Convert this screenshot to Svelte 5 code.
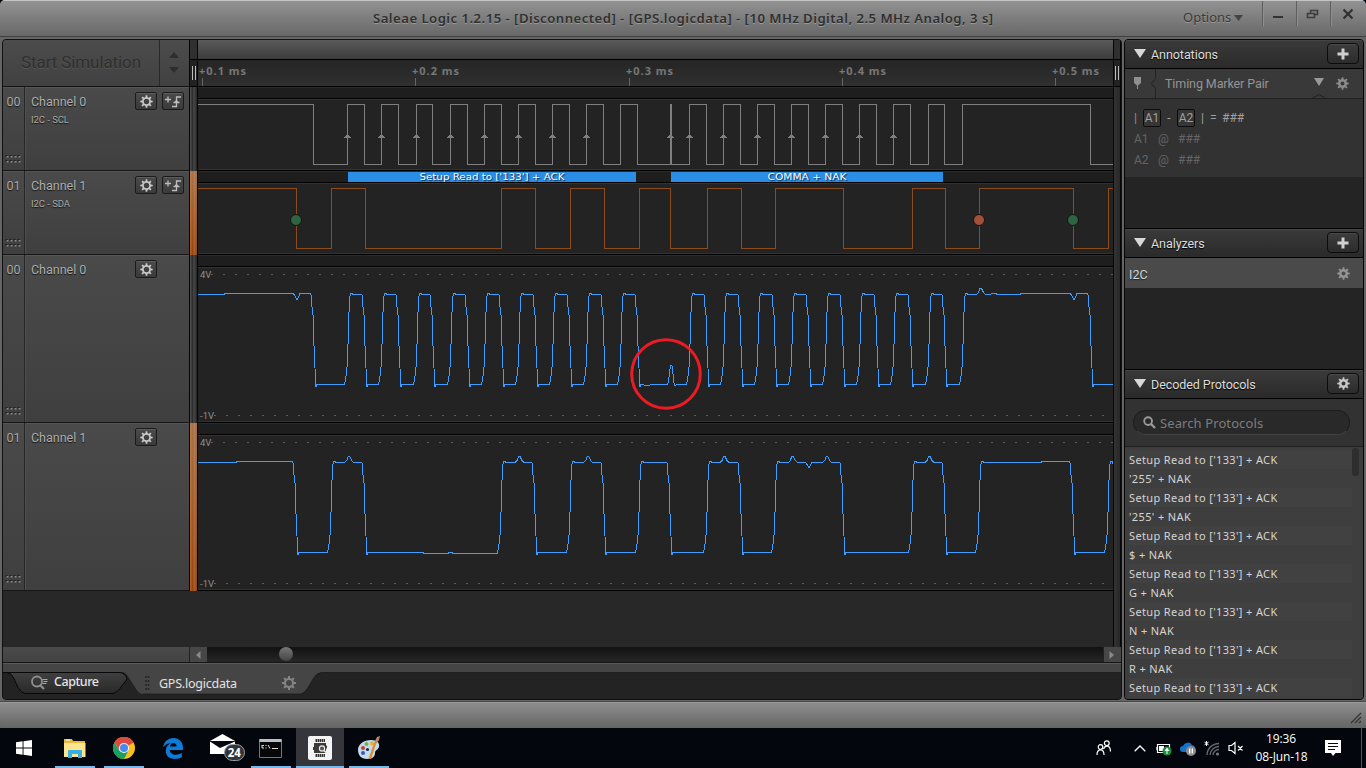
<script>
  const LEFT = 198;
  const WIDTH = 915;

  const sclEdges = [313, 347, 364, 381, 398, 416, 432, 450, 467, 484, 501, 518, 535, 552, 569, 586, 603, 620, 637,
    689, 706, 723, 740, 757, 774, 791, 808, 825, 842, 859, 876, 893, 910, 928, 944, 962, 1090];
  const sdaEdges = [296, 331, 365, 501, 535, 570, 604, 639, 670, 707, 741, 775, 843, 912, 945, 979, 1073, 1108];
  const sclArrows = [347, 381, 416, 450, 484, 518, 552, 586, 670, 689, 723, 757, 791, 825, 859, 893];

  function digital(edges) {
    let high = true;
    let d = `M${LEFT} 17.5`;
    for (const e of edges) {
      d += `H${e + 0.5}V${high ? 77.5 : 17.5}`;
      high = !high;
    }
    return d + `H${LEFT + WIDTH}`;
  }

  // Slow edges of the sampled voltage, relative to the logic transition.
  const fall = [[-2, 40], [-1.5, 43], [-1, 52], [0, 60], [0.5, 69], [1, 91], [2, 113], [2.5, 131.5], [3.5, 131.5], [4, 129.5], [6, 129.5]];
  const rise = [[-3, 129.5], [-2, 125], [-1, 117], [0, 108], [1, 71], [2, 44], [3, 38.5], [4.5, 38.5], [5, 39.5]];

  function analog(edges, extras, start, shift) {
    let high = true;
    const pts = [[LEFT, 39.5], [start, 39.5], [start, 38.5]];
    for (const e of edges) {
      const rested = [296, 313, 1073, 1090].includes(e);
      if (high) pts.push([e - 3 + shift, rested ? 38.5 : 39.5]);
      for (const [dx, y] of high ? fall : rise) pts.push([e + dx + shift + (high ? 0 : 0.5), y]);
      high = !high;
    }
    pts.push([LEFT + WIDTH, high ? 38.5 : 129.5]);
    for (const ex of extras) for (const p of ex) pts.push(p);
    pts.sort((a, b) => a[0] - b[0]);
    return pts.map((p) => p.join(',')).join(' ');
  }
  const bump = (x, b = 39.5) => [[x - 4, b], [x - 2, b - 2], [x - 0.5, 33.5], [x + 1, 33.5], [x + 3, b - 2], [x + 5, b]];
  const dip = (x, b = 38.5) => [[x - 3.5, b], [x - 1.5, 42], [x, 45], [x + 1.5, 42], [x + 3, b]];

  const ch0 = analog(sclEdges, [
    dip(297), dip(1074), bump(980.5),
    [[645, 130.5], [655, 129.5], [667.5, 129.5], [668.5, 127], [669.5, 118], [670.5, 110.5], [672, 110.5], [673, 119], [674, 128], [675, 131], [677, 129.5]],
    [[996, 38.5], [997, 39.5], [1020, 39.5], [1021, 38.5]]
  ], 224, 0);
  const ch1 = analog(sdaEdges, [
    bump(348.7), bump(519), bump(587.7), bump(724), bump(792.3), bump(826.7), bump(929), dip(809, 39.5),
    [[423, 129.5], [424, 130.5], [448, 130.5], [449, 129.5], [452, 129.5], [453, 130.5], [497, 130.5]],
    [[1041, 39.5], [1042, 38.5]]
  ], 236, -1);

  const rows = [
    { n: '00', name: 'Channel 0', sub: 'I2C - SCL', kind: 'digital', hot: false, h: 84, color: '#7f7f7f', d: digital(sclEdges) },
    { n: '01', name: 'Channel 1', sub: 'I2C - SDA', kind: 'digital', hot: true, h: 84, color: '#8b4b1b', d: digital(sdaEdges) },
    { n: '00', name: 'Channel 0', kind: 'analog', hot: false, h: 168, pts: ch0 },
    { n: '01', name: 'Channel 1', kind: 'analog', hot: true, h: 168, pts: ch1 }
  ];
  const frames = [{ x: 348, w: 288, t: "Setup Read to ['133'] + ACK", l: 145 }, { x: 671, w: 272, t: 'COMMA + NAK', l: 79 }];
  const ticks = [202, 415, 629, 842, 1055];
  const S = "Setup Read to ['133'] + ACK";
  const decoded = [S, "'255' + NAK", S, "'255' + NAK", S, '$ + NAK', S, 'G + NAK', S, 'N + NAK', S, 'R + NAK', S];

  function gearPath(teeth, ro, ri) {
    const pts = [];
    const step = (Math.PI * 2) / teeth;
    for (let i = 0; i < teeth; i++) {
      const a = i * step - Math.PI / 2;
      for (const [f, r] of [[-0.27, ri], [-0.17, ro], [0.17, ro], [0.27, ri]])
        pts.push(`${(Math.cos(a + f * step) * r).toFixed(2)} ${(Math.sin(a + f * step) * r).toFixed(2)}`);
    }
    return 'M' + pts.join('L') + 'Z';
  }
  const gearD = gearPath(8, 6.3, 4.5);
</script>

{#snippet gear(size, color, hole)}
  <svg width={size} height={size} viewBox="-6.5 -6.5 13 13">
    <path fill-rule="evenodd" fill={color} d={gearD + `M${hole} 0A${hole} ${hole} 0 1 0 ${-hole} 0A${hole} ${hole} 0 1 0 ${hole} 0Z`} />
  </svg>
{/snippet}

{#snippet plus()}
  <svg width="12" height="12" viewBox="0 0 12 12"><path d="M6 .5v11M.5 6h11" stroke="#d0d0d0" stroke-width="3" /></svg>
{/snippet}

{#snippet tri()}
  <svg class="tri" width="12" height="9" viewBox="0 0 12 9"><path d="M0 0h12L6 9z" fill="#d8d8d8" /></svg>
{/snippet}

<div class="window">
  <header class="titlebar">
    <div class="title"><span>Saleae Logic 1.2.15 - [Disconnected] - [GPS.logicdata] - [10 MHz Digital, 2.5 MHz Analog, 3 s]</span></div>
    <div class="options">Options <svg width="9" height="6" viewBox="0 0 9 6"><path d="M0 0h9L4.500 6z" fill="#444" /></svg></div>
    <div class="wbtn"><svg width="12" height="14"><path d="M1 10h10" stroke="#333" stroke-width="2" /></svg></div>
    <div class="wbtn"><svg width="13" height="14" viewBox="0 0 13 14"><path d="M4.500 7V3.500h7v4h-3M1.500 6.500h7v4h-7z" fill="none" stroke="#3c3c3c" stroke-width="1.600" /></svg></div>
    <div class="wbtn last"><svg width="12" height="14" viewBox="0 0 12 14"><path d="M1.500 2.500l9 9M10.500 2.500l-9 9" stroke="#303030" stroke-width="2.200" /></svg></div>
  </header>

  <main>
    <section class="capture">
      <div class="row toolbar">
        <div class="sim">
          <div class="start">Start Simulation</div>
          <div class="spin">
            <svg width="10" height="21" viewBox="0 0 10 21"><path d="M0 6L5 0 10 6zM0 15h10L5 21z" fill="#2e2e2e" /></svg>
          </div>
        </div>
        <div class="gut top"><svg width="4" height="14"><path d="M.5 0v14M3.500 0v14" stroke="#bbb" /></svg></div>
        <div class="timeline">
          <div class="overview"></div>
          <svg class="ruler" width={WIDTH} height="26" viewBox="198 60 915 26">
            {#each ticks as t, i}
              <path d={`M${t + 0.5} 78v8`} stroke="#666" />
              <text x={t - 3} y="75" textLength="47">+0.{i + 1} ms</text>
            {/each}
          </svg>
        </div>
        <div class="gut top"><svg width="4" height="14"><path d="M.5 0v14M3.500 0v14" stroke="#bbb" /></svg></div>
      </div>

      {#each rows as r, idx}
        <div class="row" style={`height:${r.h}px`}>
          <div class="chan">
            <div class="num"><span>{r.n}</span>
              <svg width="16" height="8" viewBox="0 0 16 8">
                {#each [0, 4, 8, 12] as x}
                  {#each [0, 5] as y}
                    <rect x={x + 0.5} {y} width="2" height="2" fill="#1f1f1f" /><rect x={x + 1.500} y={y + 1} width="2" height="1.500" fill="#8a8a8a" />
                  {/each}
                {/each}
              </svg>
            </div>
            <div class="info">
              <div class="names"><b>{r.name}</b>{#if r.sub}<small>{r.sub}</small>{/if}</div>
              <div class="btns">
                <span class="btn">{@render gear(13, '#c8c8c8', 2.7)}</span>
                {#if r.sub}
                  <span class="btn"><svg width="18" height="14" viewBox="0 0 18 14"><path d="M1 5.500h6M4 2.500v6M8 12.500h4.500V3H17M9.500 8.500h6" fill="none" stroke="#bdbdbd" stroke-width="1.300" /><path d="M9.800 9l2.700-3.500L15.200 9z" fill="#bdbdbd" /></svg></span>
                {/if}
              </div>
            </div>
          </div>
          <div class="gut" class:hot={r.hot}></div>
          <div class="track">
            <svg width={WIDTH} height={r.h - 1} viewBox={`${LEFT} 0 ${WIDTH} ${r.h - 1}`}>
              <rect x="198" y="0" width="915" height="11" fill="#1e1e1e" />
              <rect x="198" y="0" width="915" height="1" fill="#2a2a2a" />
              <rect x="198" y="11" width="915" height="1" fill="#000" />
              <rect x="198" y="12" width="915" height="1" fill="#333" />
              <rect x="198" y={r.h - 2} width="915" height="1" fill="#333" />
              {#if r.kind === 'digital'}
                <path d={r.d} fill="none" stroke={r.color} shape-rendering="crispEdges" />
                {#if idx === 0}
                  <rect x="670" y="17" width="2" height="61" fill="#7f7f7f" />
                  {#each sclArrows as a}<path d={`M${a - 3} 51h7v-1h-1v-1h-1v-1h-3v1h-1v1h-1z`} fill="#7f7f7f" />{/each}
                {:else}
                  {#each frames as f}
                    <rect x={f.x} y="1" width={f.w} height="10" fill="#2a8ee6" />
                    <text class="frame" x={f.x + f.w / 2} y="9" text-anchor="middle" textLength={f.l} lengthAdjust="spacingAndGlyphs">{f.t}</text>
                  {/each}
                  {#each [[296, '#2c653f'], [979, '#a54f38'], [1073, '#2c653f']] as [x, c]}
                    <circle cx={x} cy="49" r="5.500" fill={c} stroke="#141414" />
                  {/each}
                {/if}
              {:else}
                <path d="M211 19.500h2M223 19.500H1113" stroke="#5c5c5c" stroke-dasharray="2 10" />
                <path d="M214 160.500h2M226 160.500H1108" stroke="#5c5c5c" stroke-dasharray="2 10" />
                <text class="volt" x="200" y="23">4V</text>
                <text class="volt" x="200" y="164">-1V</text>
                <polyline points={r.pts} fill="none" stroke="#3f9dff" stroke-width="1" shape-rendering="crispEdges" />
                {#if idx === 2}<circle cx="666" cy="119" r="34.300" fill="none" stroke="#ed1c24" stroke-width="3" />{/if}
              {/if}
            </svg>
          </div>
          <div class="gut side"></div>
        </div>
      {/each}

      <div class="row filler"><div></div><div></div><div></div><div class="gut side"></div></div>

      <div class="scroll">
        <div class="pad"></div>
        <div class="arrow"><svg width="6" height="8"><path d="M5.500 0v8L1 4z" fill="#8a8a8a" /></svg></div>
        <div class="rail"><i></i></div>
        <div class="arrow"><svg width="6" height="8"><path d="M.5 0v8L5 4z" fill="#8a8a8a" /></svg></div>
      </div>

      <svg class="tabs" width="1118" height="36" viewBox="3 663 1118 36">
        <defs>
          <linearGradient id="tg" x1="0" y1="0" x2="0" y2="1"><stop offset="0" stop-color="#404040" /><stop offset="1" stop-color="#292929" /></linearGradient>
        </defs>
        <rect x="3" y="663" width="1118" height="36" fill="#232323" />
        <path d="M3 663h1118v9.500H322q-5 0-8 5l-6 10q-4 6.500-8 6.500H143q-4 0-7.500-6l-7-11q-3-5-7-5H3z" fill="#454545" />
        <path d="M1121 672.500H322q-5 0-8 5l-6 10q-4 6.500-8 6.500H143" fill="none" stroke="#171717" stroke-width=".7" />
        <path d="M3 672.500h4q4 0 7 6l4 9q4 6 7 6h88q4-1 7-5l7-9.500q-2-6.500-8-6.500z" fill="url(#tg)" stroke="#080808" />
        <path d="M3 663.500h1118" stroke="#5a5a5a" />
        <circle cx="37" cy="681.500" r="5" fill="none" stroke="#8e8e8e" stroke-width="1.800" />
        <path d="M40 685l4 4" stroke="#8e8e8e" stroke-width="2.200" />
        <path d="M42.500 679.500h5M43.500 681.500h4M42.500 683.500h4" stroke="#aaa" />
        <text x="54" y="686" class="tab on" textLength="45">Capture</text>
        <path d="M146 676v15M148.500 676v15" stroke="#252525" stroke-width="1.500" stroke-dasharray="2 2" />
        <text x="159" y="688" class="tab" textLength="78">GPS.logicdata</text>
        <g transform="translate(289 683) scale(1.120)"><path d={gearD + 'M2.700 0A2.700 2.700 0 1 0 -2.700 0A2.700 2.700 0 1 0 2.700 0Z'} fill="#858585" fill-rule="evenodd" /></g>
      </svg>
    </section>

    <aside>
      <div class="head">{@render tri()}<span>Annotations</span><em>{@render plus()}</em></div>
      <div class="sub">
        <svg width="34" height="29" viewBox="0 0 34 29"><path d="M9 8h7v6l-3 2.500v3.500h-1v-3.500L9 14z" fill="#8f8f8f" /><path d="M30.500 0v9.500l-4 5 4 5V29" fill="none" stroke="#222" /></svg>
        <span>Timing Marker Pair</span>
        <svg width="20" height="30" viewBox="0 0 20 30"><path d="M5 9h10l-5 8z" fill="#999" /><path d="M2 30l8-4.500 8 4.500" fill="none" stroke="#222" /></svg>
        <i>{@render gear(13, '#8c8c8c', 2)}</i>
      </div>
      <div class="notes">
        <p><s class="bar">|</s><u>A1</u><s class="minus">-</s><u>A2</u><s class="bar2">|</s><s class="eq">=</s><s>###</s></p>
        <p class="dim"><s class="a">A1</s><s class="at">@</s><s>###</s></p>
        <p class="dim"><s class="a">A2</s><s class="at">@</s><s>###</s></p>
      </div>
      <div class="void one"></div>
      <div class="head line">{@render tri()}<span>Analyzers</span><em>{@render plus()}</em></div>
      <div class="i2c"><span>I2C</span>{@render gear(13, '#949494', 2)}</div>
      <div class="void two"></div>
      <div class="head line">{@render tri()}<span>Decoded Protocols</span><em>{@render gear(13, '#c8c8c8', 2)}</em></div>
      <div class="searchbox"><div class="search">
        <svg width="13" height="13" viewBox="0 0 14 14"><circle cx="5.500" cy="5.500" r="4.200" fill="none" stroke="#999" stroke-width="2" /><path d="M8.500 8.500L13 13" stroke="#999" stroke-width="2.400" /></svg>
        <span>Search Protocols</span></div></div>
      <div class="list">
        <div class="items">{#each decoded as d}<div>{d}</div>{/each}</div>
        <div class="thumb"></div>
      </div>
    </aside>
  </main>

  <footer><svg width="12" height="12" viewBox="0 0 12 12"><path d="M1 11L11 1M5 11l6-6M9 11l2-2" stroke="#333" stroke-width="1.200" /></svg></footer>
</div>

<div class="taskbar">
  <div class="t win"><svg width="16" height="16" viewBox="0 0 16 16"><path d="M0 2.300L6.600 1.300v6.200H0zM7.500 1.200L16 0v7.500H7.500zM0 8.500h6.600v6.200L0 13.700zM7.500 8.500H16V16l-8.500-1.200z" fill="#fff" /></svg></div>
  <div class="t run"><svg width="22" height="19" viewBox="0 0 22 19"><path d="M0 0h8l1 2h12v16H0z" fill="#e8b93c" /><path d="M0 4h21.500v14H0z" fill="#fde48e" /><path d="M2 1h4" stroke="#fff" /><path d="M4 19v-7q0-1 1-1h12q1 0 1 1v7h-4v-4H8v4z" fill="#37b0e4" /></svg></div>
  <div class="t run"><svg width="22" height="22" viewBox="-11 -11 22 22"><circle r="11" fill="#fbc116" /><path d="M0 0L-9.530-5.500A11 11 0 0 1 9.530-5.500z" fill="#dd4b3e" /><path d="M-9.530-5.500A11 11 0 0 0 0 11L4.600 2.500-4.500 3z" fill="#1aa15f" /><path d="M0-5.200H9.600A11 11 0 0 0-9.530-5.500L-4.500 2.600z" fill="#dd4b3e" /><circle r="5.100" fill="#f4f4f4" /><circle r="4" fill="#4a89f0" /></svg></div>
  <div class="t"><svg width="20" height="21" viewBox="0 0 20 21"><path d="M0 9.500C1 3.500 5 0 10.500 0 16.500 0 20 4.500 20 9.800V12H6.800c.2 3.200 2.700 4.700 5.800 4.700 2.300 0 4.300-.6 6.200-1.700v4.300C16.800 20.400 14.500 21 11.800 21 6.500 21 2.800 18 2.800 13c0-3.600 1.800-6.300 5-7.900C4.500 5.200 1.800 7 0 9.500zM7 8.600h6.600c0-2.200-1-3.600-3.100-3.600C8.400 5 7.300 6.500 7 8.600z" fill="#0d7bd8" /></svg></div>
  <div class="t mail"><svg width="36" height="32" viewBox="0 0 36 32"><path d="M0 9L12.500 2 25 9v13H0z" fill="#fff" /><path d="M0 9.500L10 16 25 9.500V9H0z" fill="#03060c" /><rect x="14.500" y="12.500" width="20" height="16" rx="8" fill="#30353a" stroke="#9a9da0" /><text x="24.300" y="25" text-anchor="middle">24</text></svg></div>
  <div class="t run cmd"><svg width="23" height="19" viewBox="0 0 23 19"><path d="M.5.5h22v18H.5z" fill="#080808" stroke="#777" /><path d="M.5 0h22v3H.5z" fill="#b9c0c8" /><path d="M3 6.500h2M3 6v3M3 9h2M7 6v1M7 8.500v1M9 6l2 3.500M13 9.500h6" stroke="#ddd" /></svg></div>
  <div class="t run active"><svg width="24" height="24" viewBox="0 0 24 24"><rect width="24" height="24" rx="2" fill="#f4f4f4" /><path d="M7.500 4.500h9.500M7.500 19.500h9.500" stroke="#333" stroke-width="3" stroke-dasharray="1.500 .5" /><path d="M6 7h12v2.500h1v3h-1V17H6v-3H5v-3h1z" fill="#3b3b3b" /><circle cx="14" cy="12.500" r="2.600" fill="#555" stroke="#eee" stroke-width="1.100" /><path d="M16 14.500l3 3" stroke="#eee" stroke-width="1.600" /></svg></div>
  <div class="t run"><svg width="24" height="24" viewBox="0 0 24 24"><path d="M1 14C1 8 7 4 14 4c6 0 9 3 8 7-1 3-4 3-4 6s-2 6-8 6C4 23 1 19 1 14z" fill="#c3dcec" /><circle cx="6" cy="12" r="2" fill="#d1393a" /><circle cx="9.500" cy="8" r="2" fill="#72b445" /><circle cx="15" cy="7.500" r="2" fill="#eaaf2f" /><circle cx="6" cy="17" r="2" fill="#4057b5" /><circle cx="10.500" cy="13.500" r="1.600" fill="#15324a" /><path d="M11.500 23L17 7l2 1-5 15z" fill="#e08a2e" /><path d="M17 7l3-6 3-1-1 4-3 4z" fill="#b98a5e" /></svg></div>

  <div class="tray">
    <svg width="16" height="16" viewBox="0 0 16 16" fill="none" stroke="#fff" stroke-width="1.200"><circle cx="4.500" cy="7" r="2.300" /><path d="M1 15c0-3.500 1.300-5.200 3.500-5.200S8 11.500 8 15" /><circle cx="10.800" cy="3.200" r="2.400" /><path d="M7.500 9c.8-2 1.700-2.900 3.300-2.900 2.400 0 3.700 2 3.700 5.400" /></svg>
    <svg class="chev" width="12" height="7" viewBox="0 0 12 7"><path d="M.7 6.300L6 1l5.300 5.300" fill="none" stroke="#fff" stroke-width="1.300" /></svg>
    <svg class="low" width="16" height="14" viewBox="0 0 16 14"><path d="M1.500 2.500h12v8h-12zM0 5v3" fill="none" stroke="#fff" stroke-width="1.200" /><path d="M3 4h5v5H3z" fill="#fff" /><circle cx="11" cy="9" r="4.500" fill="#16913a" /><path d="M11 5.500l2.500 3.500h-2v3h-1V9h-2z" fill="#fff" /></svg>
    <svg class="low" width="16" height="14" viewBox="0 0 16 14"><path d="M3 10a3 3 0 0 1 0-6 5 5 0 0 1 9-1 4 4 0 0 1 2 7z" fill="#1573cb" /><circle cx="11" cy="9" r="5" fill="#8d8d8d" /><path d="M9.700 6.500v5M12.300 6.500v5" stroke="#fff" stroke-width="1.300" /></svg>
    <svg width="16" height="17" viewBox="0 0 16 17"><path d="M2.500 1v5M.5 2.200l4 2.600M4.500 2.200l-4 2.600" stroke="#fff" /><path d="M3 15A12 12 0 0 1 15 3.500M6 15a9 9 0 0 1 9-8.500M9 15a6 6 0 0 1 6-5.500" fill="none" stroke="#686c70" stroke-width="1.400" /><circle cx="13.500" cy="14" r="1.600" fill="#777" /></svg>
    <svg width="16" height="14" viewBox="0 0 16 14"><path d="M1 4.500h2.500L7 1.500v11L3.500 9.500H1zM10 5l4.500 4.500M14.500 5L10 9.500" fill="none" stroke="#fff" stroke-width="1.200" /></svg>
    <div class="clock"><span>19:36</span><span>08-Jun-18</span></div>
    <svg class="msg" width="16" height="16" viewBox="0 0 16 16"><path d="M0 0h16v13h-5.500L8 16l-2-3H0z" fill="#fff" /><path d="M3 3.500h10M3 6.500h10M3 9.500h7" stroke="#03060c" /></svg>
    <div class="peek"></div>
  </div>
</div>

<style>
  :global(body) { margin: 0; overflow: hidden; background: #03060c; }
  svg { display: block; flex: none; }
  .window { width: 1366px; height: 728px; box-sizing: border-box; background: #656565; display: flex; flex-direction: column; font-family: Roboto, sans-serif; overflow: hidden; border-radius: 5px 5px 0 0; }
  .titlebar { height: 37px; margin-bottom: 2px; box-sizing: border-box; flex: none; display: grid; grid-template-columns: 1170px 92px 34px 34px 36px; background: linear-gradient(#929292, #686868); border-top: 1px solid #c4c4c4; border-bottom: 1px solid #404040; color: #303030; }
  .title { padding-left: 373px; font: 600 13.200px/35px "Noto Sans", sans-serif; letter-spacing: .45px; text-shadow: 0 1px 0 #9a9a9a; white-space: pre; }
  .options { font: 13px/32px "Noto Sans", sans-serif; padding-left: 13px; display: flex; align-items: center; gap: 3px; height: 32px; color: #3a3a3a; text-shadow: 0 1px 0 #999; }
  .options svg { margin-top: 2px; }
  .wbtn { height: 25px; box-sizing: border-box; padding-right: 3px; border-left: 1px solid #5e5e5e; display: flex; align-items: center; justify-content: center; box-shadow: inset 1px 0 #8f8f8f; }
  .wbtn.last { padding-right: 2px; }
  main { height: 661px; flex: none; display: flex; gap: 2px; padding: 0 2px; }
  .capture { width: 1120px; box-sizing: border-box; border: 1px solid #111; border-radius: 4px; background: #282828; display: flex; flex-direction: column; overflow: hidden; }
  .row { display: grid; grid-template-columns: 187px 8px 915px 8px; flex: none; }
  .row > .gut:nth-child(2) { margin-left: -1px; }
  .toolbar { height: 47px; }
  .sim { display: flex; border-bottom: 1px solid #151515; background: linear-gradient(#4c4c4c, #414141); }
  .start { width: 157px; box-sizing: border-box; border-right: 1px solid #292929; font-size: 17px; line-height: 45px; text-align: center; letter-spacing: -.1px; color: #2f2f2f; text-shadow: 0 1px 0 #555; }
  .spin { flex: 1; display: flex; align-items: center; justify-content: center; padding: 0 2px 1px 0; }
  .gut { box-sizing: border-box; border: solid #060606; border-width: 0 1px; background: linear-gradient(90deg, #555, #2c2c2c 35%, #4a4a4a 55%, #252525); }
  .gut.hot { background: linear-gradient(rgba(190, 165, 140, .45), rgba(190, 110, 40, 0)), linear-gradient(90deg, #bd621c, #8c4517 40%, #b45e20 60%, #8b4719); }
  .gut.side { background: linear-gradient(90deg, #333, #282828); }
  .gut.top { background: linear-gradient(#303030 0 19px, #000 19px 20px, #222 20px); border-bottom: 1px solid #000; display: flex; justify-content: center; padding-top: 26px; }
  .timeline { border-bottom: 1px solid #000; }
  .overview { height: 19px; background: linear-gradient(#5a5a5a, #3c3c3c); border-bottom: 1px solid #000; }
  .ruler { background: linear-gradient(#252525, #303030); }
  .ruler text { font: 700 11px "Noto Sans", sans-serif; fill: #777; }
  .chan { display: flex; background: linear-gradient(#4a4a4a, #3f3f3f); border-bottom: 1px solid #161616; box-shadow: inset 0 1px #555; }
  .num { width: 22px; box-sizing: border-box; border-right: 1px solid #262626; display: flex; flex-direction: column; justify-content: space-between; align-items: center; padding: 7px 0 7px; font-size: 12.500px; line-height: 15px; color: #aaa; text-shadow: 0 1px 1px #111; }
  .num svg { margin-right: 2px; }
  .info { flex: 1; display: flex; justify-content: space-between; padding: 5px 6px 0 5px; border-left: 1px solid #505050; }
  .names { display: flex; flex-direction: column; color: #b0b0b0; text-shadow: 0 1px 1px #111; }
  .names b { font: 400 12.500px/20px Roboto, sans-serif; letter-spacing: -.02px; }
  .names small { font-size: 9.500px; line-height: 15px; color: #aaa; letter-spacing: -.05px; }
  .btns { display: flex; gap: 5px; width: 49px; }
  .btn { width: 20px; height: 16px; border: 1px solid #1b1b1b; border-radius: 2px; background: linear-gradient(#4a4a4a, #3a3a3a); box-shadow: inset 0 1px #5c5c5c; display: flex; align-items: center; justify-content: center; }
  .track { background: #232323; border-bottom: 1px solid #000; }
  .frame { font: 9.500px "DejaVu Sans", sans-serif; fill: #fff; text-shadow: 1px 1px 1px #124; }
  .volt { font: 9.500px Roboto, sans-serif; fill: #909090; }
  .filler { height: 56px; }
  .scroll { height: 16px; flex: none; display: flex; box-sizing: border-box; border-bottom: 1px solid #151515; }
  .pad { width: 186px; background: linear-gradient(#4b4b4b, #424242); }
  .arrow { width: 18px; box-sizing: border-box; border-left: 1px solid #222; background: #474747; display: flex; align-items: center; justify-content: center; padding-right: 2px; }
  .rail { flex: 1; background: linear-gradient(#121212, #262626); padding-left: 72px; }
  .rail i { display: block; width: 14px; height: 14px; border-radius: 7px; background: linear-gradient(#777, #444); }
  .tab { font: 12.500px "Noto Sans", sans-serif; fill: #e2e2e2; }
  .tab.on { fill: #e6e6e6; font-weight: 500; }

  aside { width: 240px; box-sizing: border-box; border: 1px solid #060606; border-radius: 4px; background: #242424; display: flex; flex-direction: column; overflow: hidden; }
  .head { height: 29px; box-sizing: border-box; flex: none; border-bottom: 1px solid #000; background: linear-gradient(#3a3a3a, #2a2a2a); display: flex; align-items: center; padding: 0 4px 0 9px; font-size: 12.500px; color: #dedede; box-shadow: inset 0 1px #454545; }
  .head.line { height: 30px; border-top: 1px solid #000; }
  .tri { margin-top: -2px; }
  .head span { flex: 1; padding-left: 5px; text-shadow: 0 1px 1px #000; letter-spacing: -.06px; }
  .head em { width: 30px; height: 19px; margin-top: -1px; border: 1px solid #0c0c0c; border-radius: 4px; background: linear-gradient(#3d3d3d, #2c2c2c); box-shadow: inset 0 1px #484848; display: flex; align-items: center; justify-content: center; }
  .sub { height: 30px; box-sizing: border-box; flex: none; display: flex; border-bottom: 1px solid #212121; background: #393939; font-size: 12.500px; color: #949494; line-height: 29px; }
  .sub span { width: 150px; padding-left: 6px; box-sizing: border-box; letter-spacing: -.1px; }
  .sub i { padding: 8px 0 0 7px; }
  .notes { height: 78px; box-sizing: border-box; flex: none; background: #323232; padding-top: 8px; font-size: 12px; color: #a0a0a0; }
  .notes p { margin: 0; height: 21px; display: flex; align-items: center; padding-left: 9px; }
  .notes s { text-decoration: none; }
  .notes u { text-decoration: none; width: 16px; height: 16px; line-height: 17px; text-align: center; border: 1px solid #0c0c0c; border-radius: 2px; background: #363636; }
  .bar { width: 9px; color: #a08a78; } .minus { width: 16px; text-align: center; } .bar2 { width: 15px; text-align: center; } .eq { width: 9px; padding-right: 3px; }
  .dim { color: #646464; } .a { width: 24px; } .at { width: 20px; }
  .void { flex: none; } .one { height: 51px; } .two { height: 81px; }
  .i2c { height: 30px; flex: none; background: #4a4a4a; display: flex; align-items: center; justify-content: space-between; padding: 0 13px 0 4px; font-size: 12.500px; color: #d8d8d8; text-shadow: 0 1px 1px #222; }
  .i2c span { padding-top: 2px; }
  .searchbox { height: 48px; box-sizing: border-box; flex: none; background: #323232; border-bottom: 1px solid #1e1e1e; padding: 11px 13px 0 8px; }
  .search { height: 23px; border: 1px solid #1d1d1d; border-bottom-color: #444; border-radius: 13px; background: #292929; display: flex; align-items: center; gap: 4px; padding-left: 9px; font: 13px "Noto Sans", sans-serif; letter-spacing: .1px; color: #7d7d7d; }
  .list { flex: 1; display: flex; background: #3e3e3e; }
  .items { flex: 1; padding: 3px 0 0 4px; font: 11px/19px "Noto Sans", sans-serif; letter-spacing: .37px; color: #d4d4d4; }
  .items div { height: 19px; white-space: pre; }
  .items div:nth-child(odd) { background: #414141; }
  .thumb { width: 7px; height: 28px; margin: 1px 4px 0 0; border-radius: 3px; background: #2e2e2e; }
  footer { height: 26px; box-sizing: border-box; margin-top: 2px; border-top: 1px solid #9a9a9a; border-radius: 0 0 5px 5px; background: linear-gradient(#8d8d8d, #656565); display: flex; justify-content: flex-end; align-items: flex-end; padding: 0 4px 4px; box-shadow: 0 -1px #484848; }

  .taskbar { width: 1366px; height: 40px; background: #03060c; display: flex; gap: 1px; }
  .t { width: 48px; height: 40px; display: flex; align-items: center; justify-content: center; background-repeat: no-repeat; }
  .t.win { width: 50px; box-sizing: border-box; padding-right: 2px; }
  .run { background: linear-gradient(#76b9ed, #76b9ed) 50% 100% / 40px 2px no-repeat; }
  .run.active { background: linear-gradient(#76b9ed, #76b9ed) 50% 100% / 48px 2px no-repeat, #34363b; }
  .cmd svg { margin-right: 2px; }
  .mail { padding-left: 6px; margin-right: -6px; }
  .mail text { font: 700 11.500px "Open Sans", sans-serif; fill: #fff; }
  .tray { margin-left: auto; display: flex; align-items: center; gap: 8px; }
  .chev { margin: 0 2px 0 14px; }
  .low { margin-top: 1px; }
  .clock { width: 60px; margin-left: -1px; display: flex; flex-direction: column; align-items: center; font: 12px/18px "Open Sans", sans-serif; letter-spacing: -.1px; color: #fff; white-space: nowrap; }
  .clock span + span { margin-right: -1px; }
  .msg { margin-left: 6px; }
  .peek { width: 4px; height: 40px; margin-left: 12px; border-left: 1px solid #555; }
</style>
